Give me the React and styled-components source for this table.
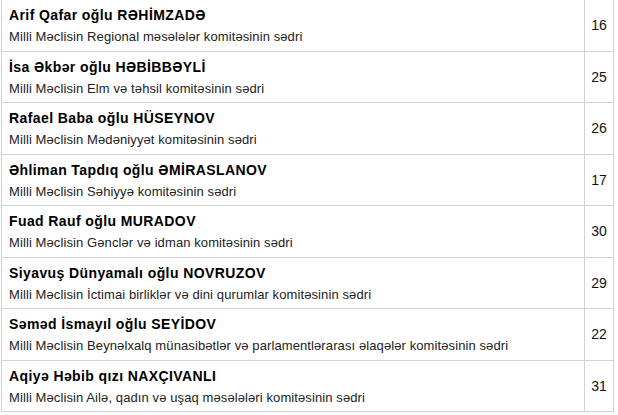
import React from "react";
import styled, { createGlobalStyle } from "styled-components";

const GlobalStyle = createGlobalStyle`
  body {
    margin: 0;
    background: #ffffff;
    font-family: "Liberation Sans", Arial, sans-serif;
  }
`;

const rows = [
  { name: "Arif Qafar oğlu RƏHİMZADƏ", post: "Milli Məclisin Regional məsələlər komitəsinin sədri", num: 16 },
  { name: "İsa Əkbər oğlu HƏBİBBƏYLİ", post: "Milli Məclisin Elm və təhsil komitəsinin sədri", num: 25 },
  { name: "Rafael Baba oğlu HÜSEYNOV", post: "Milli Məclisin Mədəniyyət komitəsinin sədri", num: 26 },
  { name: "Əhliman Tapdıq oğlu ƏMİRASLANOV", post: "Milli Məclisin Səhiyyə komitəsinin sədri", num: 17 },
  { name: "Fuad Rauf oğlu MURADOV", post: "Milli Məclisin Gənclər və idman komitəsinin sədri", num: 30 },
  { name: "Siyavuş Dünyamalı oğlu NOVRUZOV", post: "Milli Məclisin İctimai birliklər və dini qurumlar komitəsinin sədri", num: 29 },
  { name: "Səməd İsmayıl oğlu SEYİDOV", post: "Milli Məclisin Beynəlxalq münasibətlər və parlamentlərarası əlaqələr komitəsinin sədri", num: 22 },
  { name: "Aqiyə Həbib qızı NAXÇIVANLI", post: "Milli Məclisin Ailə, qadın və uşaq məsələləri komitəsinin sədri", num: 31 },
];

const Page = styled.div`
  padding-left: 1px;
  margin-top: -1px;
`;

const Table = styled.table`
  width: 613px;
  border-collapse: collapse;
  color: #000;
`;

const Row = styled.tr`
  height: 51.5px;
`;

const PersonCell = styled.td`
  border: 1px solid #d3d3d3;
  padding: 5px 8px 0 7px;
  vertical-align: top;
`;

const NumCell = styled.td`
  border: 1px solid #d3d3d3;
  width: 28px;
  padding: 0;
  text-align: center;
  vertical-align: middle;
  font-size: 14px;
  color: #111;
`;

const Name = styled.div`
  font-weight: bold;
  font-size: 14px;
  line-height: 20px;
  letter-spacing: 0.4px;
  color: #000;
`;

const Post = styled.div`
  margin-top: 2px;
  font-size: 13px;
  line-height: 20px;
  letter-spacing: 0.1px;
  color: #222;
`;

export default function App() {
  return (
    <Page>
      <GlobalStyle />
      <Table>
        <tbody>
          {rows.map((r) => (
            <Row key={r.num}>
              <PersonCell>
                <Name>{r.name}</Name>
                <Post>{r.post}</Post>
              </PersonCell>
              <NumCell>{r.num}</NumCell>
            </Row>
          ))}
        </tbody>
      </Table>
    </Page>
  );
}
